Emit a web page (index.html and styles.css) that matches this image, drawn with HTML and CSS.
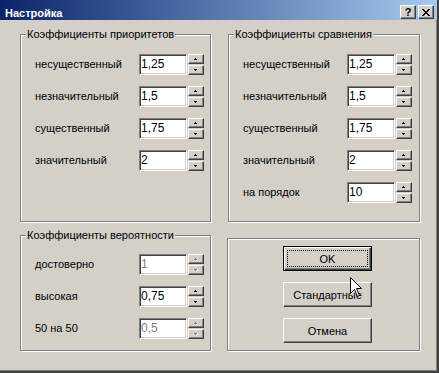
FILE: index.html
```html
<!DOCTYPE html>
<html lang="ru">
<head>
<meta charset="utf-8">
<title>Настройка</title>
<link rel="stylesheet" href="styles.css">
</head>
<body>
<div class="window">
  <div class="titlebar">
    <span class="title">Настройка</span>
    <div class="tbtns">
      <span class="tbtn help">?</span>
      <span class="tbtn close"><svg width="8" height="7" viewBox="0 0 8 7" shape-rendering="crispEdges"><path d="M0 0h2v1h-2zM6 0h2v1h-2zM1 1h2v1h-2zM5 1h2v1h-2zM2 2h4v1h-4zM3 3h2v1h-2zM2 4h4v1h-4zM1 5h2v1h-2zM5 5h2v1h-2zM0 6h2v1h-2zM6 6h2v1h-2z" fill="#000"/></svg></span>
    </div>
  </div>
  <div class="content">
    <div class="group g1">
      <span class="legend">Коэффициенты приоритетов</span>
      <div class="row"><span class="label">несущественный</span><span class="edit">1,25</span><span class="spin"><span class="sb up"></span><span class="sb down"></span></span></div>
      <div class="row"><span class="label">незначительный</span><span class="edit">1,5</span><span class="spin"><span class="sb up"></span><span class="sb down"></span></span></div>
      <div class="row"><span class="label">существенный</span><span class="edit">1,75</span><span class="spin"><span class="sb up"></span><span class="sb down"></span></span></div>
      <div class="row"><span class="label">значительный</span><span class="edit">2</span><span class="spin"><span class="sb up"></span><span class="sb down"></span></span></div>
    </div>
    <div class="group g2">
      <span class="legend">Коэффициенты сравнения</span>
      <div class="row"><span class="label">несущественный</span><span class="edit">1,25</span><span class="spin"><span class="sb up"></span><span class="sb down"></span></span></div>
      <div class="row"><span class="label">незначительный</span><span class="edit">1,5</span><span class="spin"><span class="sb up"></span><span class="sb down"></span></span></div>
      <div class="row"><span class="label">существенный</span><span class="edit">1,75</span><span class="spin"><span class="sb up"></span><span class="sb down"></span></span></div>
      <div class="row"><span class="label">значительный</span><span class="edit">2</span><span class="spin"><span class="sb up"></span><span class="sb down"></span></span></div>
      <div class="row"><span class="label">на порядок</span><span class="edit">10</span><span class="spin"><span class="sb up"></span><span class="sb down"></span></span></div>
    </div>
    <div class="group g3">
      <span class="legend">Коэффициенты вероятности</span>
      <div class="row disabled"><span class="label">достоверно</span><span class="edit">1</span><span class="spin"><span class="sb up"></span><span class="sb down"></span></span></div>
      <div class="row"><span class="label">высокая</span><span class="edit">0,75</span><span class="spin"><span class="sb up"></span><span class="sb down"></span></span></div>
      <div class="row disabled"><span class="label">50 на 50</span><span class="edit">0,5</span><span class="spin"><span class="sb up"></span><span class="sb down"></span></span></div>
    </div>
    <div class="group g4">
      <button class="btn default">OK</button>
      <button class="btn">Стандартные</button>
      <button class="btn">Отмена</button>
    </div>
  </div>
  <svg class="cursor" width="13" height="21" viewBox="0 0 13 21"><path d="M0.5 0.5 L0.5 16.5 L4.5 12.5 L7.5 19.5 L9.5 18.5 L6.5 11.5 L11.5 11.5 Z" fill="#fff" stroke="#000" stroke-width="1" stroke-linejoin="miter"/></svg>
</div>
</body>
</html>
```
FILE: styles.css
```css
* { box-sizing: border-box; }
body {
  margin: 0;
  background: #D4D0C8;
  font-family: "Liberation Sans", Arial, sans-serif;
  font-size: 11px;
  color: #000;
}
.window {
  position: relative;
  width: 439px;
  height: 373px;
  background: #D4D0C8;
  border-right: 2px solid #404040;
  border-bottom: 2px solid #404040;
  box-shadow: inset -1px -1px 0 #808080;
  display: flex;
  flex-direction: column;
}
.titlebar {
  height: 20px;
  background: linear-gradient(to right, #0A246A, #A6CAF0);
  display: flex;
  align-items: flex-start;
  justify-content: space-between;
  padding: 0 3px 0 5px;
}
.title {
  margin-top: 6px;
  line-height: 14px;
  color: #fff;
  font-weight: bold;
  font-size: 11px;
}
.tbtns {
  display: flex;
  gap: 2px;
  margin-top: 5px;
}
.tbtn {
  width: 16px;
  height: 14px;
  background: #D4D0C8;
  border: 1px solid;
  border-color: #fff #404040 #404040 #fff;
  box-shadow: inset -1px -1px 0 #808080;
  display: flex;
  align-items: center;
  justify-content: center;
  font-weight: bold;
  font-size: 11px;
  line-height: 12px;
}
.content {
  padding: 14px 0 0 20px;
  display: grid;
  grid-template-columns: 191px 192px;
  grid-template-rows: 188px 116px;
  column-gap: 17px;
  row-gap: 13px;
}
.group {
  position: relative;
  border: 1px solid #808080;
  box-shadow: inset 1px 1px 0 #fff, 1px 1px 0 #fff;
  display: flex;
  flex-direction: column;
  gap: 11px;
  padding: 19px 0 0 14px;
}
.g3 { padding-top: 18px; }
.g4 {
  margin-top: 3px;
  margin-left: -1px;
  width: 193px;
  height: 113px;
  padding: 7px 0 0 55px;
}
.legend {
  position: absolute;
  top: -7px;
  left: 5px;
  padding: 0 1px;
  line-height: 13px;
  background: #D4D0C8;
  white-space: nowrap;
}
.row {
  display: flex;
  height: 21px;
  align-items: stretch;
}
.label {
  width: 104px;
  line-height: 21px;
  white-space: nowrap;
}
.edit {
  width: 48px;
  height: 21px;
  background: #fff;
  border: 1px solid;
  border-color: #808080 #fff #fff #808080;
  box-shadow: inset 1px 1px 0 #404040, inset -1px -1px 0 #D4D0C8;
  padding-left: 1px;
  font-size: 12px;
  line-height: 19px;
}
.spin {
  margin-left: 1px;
  width: 16px;
  display: flex;
  flex-direction: column;
  gap: 1px;
}
.sb {
  position: relative;
  height: 10px;
  background: #D4D0C8;
  border: 1px solid;
  border-color: #fff #404040 #404040 #fff;
  box-shadow: inset -1px -1px 0 #808080;
}
.sb::before {
  content: "";
  position: absolute;
  left: 6px;
  width: 1px;
  height: 1px;
  background: #000;
}
.sb.up::before {
  top: 3px;
  box-shadow: -1px 1px 0 #000, 1px 1px 0 #000, 0 1px 0 #000;
}
.sb.down::before {
  top: 3px;
  box-shadow: -1px -1px 0 #000, 1px -1px 0 #000, 0 -1px 0 #000;
  transform: translateY(1px);
}
.disabled .edit { color: #808080; }
.disabled .sb::before { background: #808080; }
.disabled .sb.up::before {
  box-shadow: -1px 1px 0 #808080, 1px 1px 0 #808080, 0 1px 0 #808080, 1px 2px 0 #fff, 2px 2px 0 #fff;
}
.disabled .sb.down::before {
  box-shadow: -1px -1px 0 #808080, 1px -1px 0 #808080, 0 -1px 0 #808080, 2px 0 0 #fff, 1px 1px 0 #fff;
}
.btn {
  position: relative;
  width: 89px;
  height: 25px;
  padding: 0;
  background: #D4D0C8;
  border: 1px solid;
  border-color: #fff #404040 #404040 #fff;
  box-shadow: inset -1px -1px 0 #808080;
  font-family: "Liberation Sans", Arial, sans-serif;
  font-size: 11px;
  color: #000;
}
.btn.default {
  border: 1px solid #000;
  box-shadow: inset 1px 1px 0 #fff, inset -1px -1px 0 #404040, inset -2px -2px 0 #808080;
}
.btn.default::after {
  content: "";
  position: absolute;
  left: 3px;
  top: 3px;
  right: 3px;
  bottom: 3px;
  border: 1px dotted #000;
}
.cursor {
  position: absolute;
  left: 350px;
  top: 277px;
}
```
